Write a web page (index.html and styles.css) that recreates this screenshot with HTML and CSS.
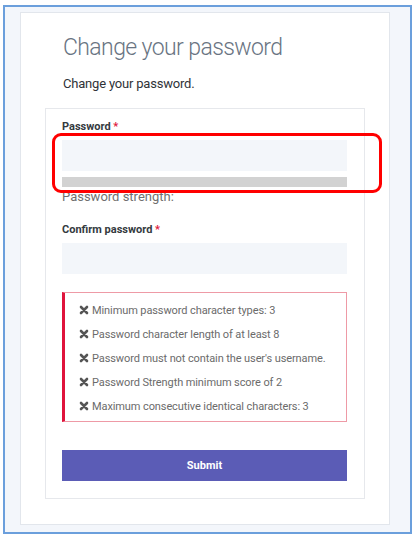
FILE: index.html
```html
<!DOCTYPE html>
<html lang="en">
<head>
<meta charset="utf-8">
<title>Change your password</title>
<link rel="stylesheet" href="styles.css">
</head>
<body>
<div class="frame">
  <div class="panel">
    <h1 class="title">Change your password</h1>
    <p class="subtitle">Change your password.</p>
    <form class="card">
      <label class="label">Password <span class="req">*</span></label>
      <div class="field">
        <div class="input"></div>
        <div class="meter"></div>
        <div class="highlight"></div>
      </div>
      <div class="strength">Password strength:</div>
      <label class="label label-confirm">Confirm password <span class="req">*</span></label>
      <div class="input"></div>
      <ul class="errors">
        <li><svg class="x" viewBox="0 0 10 10"><path d="M2 2L8 8M8 2L2 8"/></svg>Minimum password character types: 3</li>
        <li><svg class="x" viewBox="0 0 10 10"><path d="M2 2L8 8M8 2L2 8"/></svg>Password character length of at least 8</li>
        <li><svg class="x" viewBox="0 0 10 10"><path d="M2 2L8 8M8 2L2 8"/></svg>Password must not contain the user's username.</li>
        <li><svg class="x" viewBox="0 0 10 10"><path d="M2 2L8 8M8 2L2 8"/></svg>Password Strength minimum score of 2</li>
        <li><svg class="x" viewBox="0 0 10 10"><path d="M2 2L8 8M8 2L2 8"/></svg>Maximum consecutive identical characters: 3</li>
      </ul>
      <div class="submit">Submit</div>
    </form>
  </div>
</div>
</body>
</html>
```
FILE: styles.css
```css
html, body {
  margin: 0;
  padding: 0;
  background: #ffffff;
}
body {
  font-family: Roboto, "Liberation Sans", sans-serif;
  width: 412px;
  height: 534px;
  overflow: hidden;
}
.frame {
  box-sizing: border-box;
  margin: 5px 0 0 3px;
  width: 409px;
  height: 529px;
  border: 2px solid #6b9fdc;
  background: #f3f6fb;
  padding: 5px 0 0 15px;
}
.panel {
  box-sizing: border-box;
  width: 370px;
  height: 513px;
  background: #ffffff;
  border: 1px solid #e2e6ec;
  padding: 21px 24px 0 24px;
}
.title {
  margin: 0;
  padding-left: 18px;
  font-size: 23px;
  line-height: 28px;
  font-weight: 300;
  letter-spacing: -0.6px;
  color: #697482;
}
.subtitle {
  margin: 13px 0 0 0;
  padding-left: 18px;
  font-size: 13px;
  line-height: 18px;
  letter-spacing: -0.2px;
  color: #2f3338;
}
.card {
  display: flex;
  flex-direction: column;
  box-sizing: border-box;
  margin-top: 15px;
  width: 320px;
  border: 1px solid #e6e8ec;
  padding: 11px 17px 17px 16px;
}
.label {
  display: block;
  font-size: 11px;
  line-height: 14px;
  font-weight: 700;
  color: #343a40;
  margin-bottom: 6px;
}
.label-confirm {
  margin-top: 17px;
  margin-bottom: 6px;
}
.req {
  color: #e0173c;
}
.field {
  position: relative;
}
.input {
  height: 31px;
  background: #f3f6fa;
}
.meter {
  margin-top: 6px;
  height: 10px;
  background: #d2d2d2;
}
.highlight {
  position: absolute;
  left: -10px;
  top: -7px;
  width: 330px;
  height: 60px;
  box-sizing: border-box;
  border: 3px solid #ff0000;
  border-radius: 9px;
}
.strength {
  margin-top: 1px;
  font-size: 13px;
  line-height: 18px;
  color: #6f6f6f;
}
.errors {
  list-style: none;
  margin: 18px 0 0 0;
  padding: 5px 0 3px 14px;
  border: 1px solid #ee9aa6;
  border-left: 3px solid #e0143c;
}
.errors li {
  display: flex;
  align-items: center;
  height: 24px;
  font-size: 11px;
  letter-spacing: -0.1px;
  color: #6b6b6b;
}
.x {
  width: 10px;
  height: 10px;
  margin-right: 3px;
  flex: none;
}
.x path {
  stroke: #555555;
  stroke-width: 2.6;
  stroke-linecap: round;
  fill: none;
}
.submit {
  margin-top: 28px;
  height: 31px;
  background: #5b5cb6;
  color: #ffffff;
  font-size: 11px;
  font-weight: 700;
  display: flex;
  align-items: center;
  justify-content: center;
}
```
